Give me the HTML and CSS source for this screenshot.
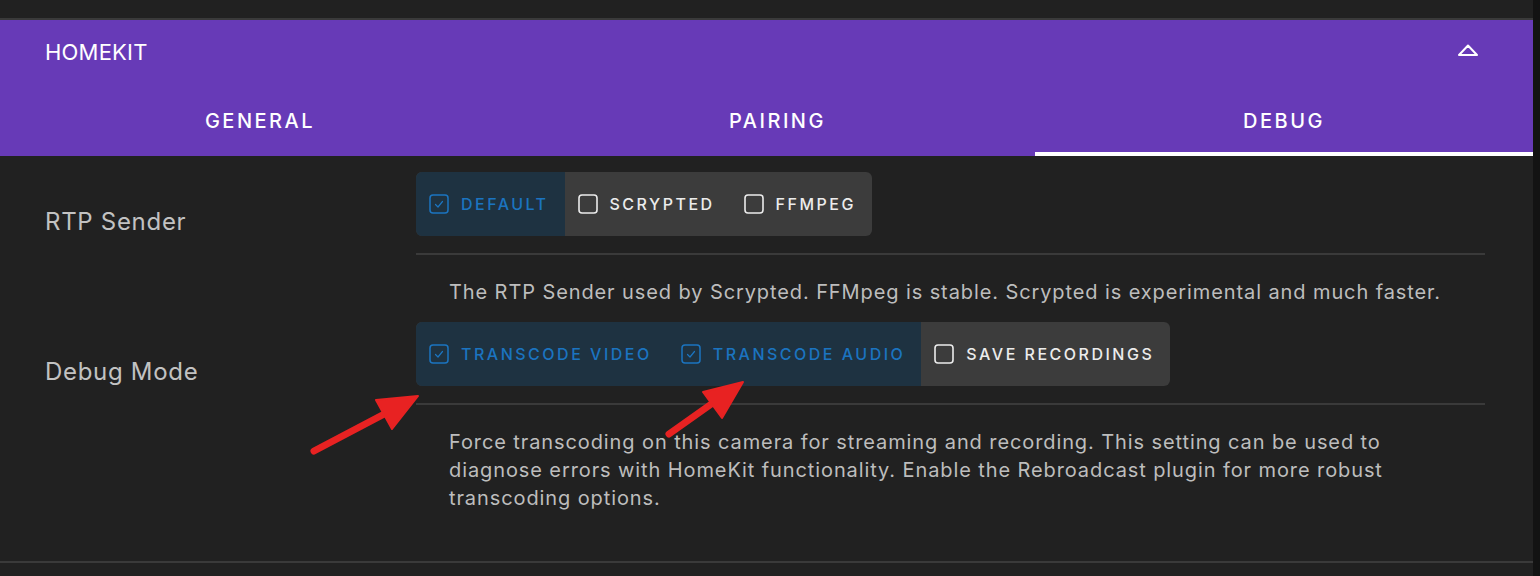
FILE: index.html
```html
<!DOCTYPE html>
<html lang="en">
<head>
<meta charset="utf-8">
<title>HomeKit</title>
<link rel="stylesheet" href="styles.css">
</head>
<body>
<div class="page">
  <div class="card">
    <header class="card-header">
      <div class="title-row">
        <span class="title">HOMEKIT</span>
        <svg class="chevron" width="22" height="14" viewBox="0 0 22 14" aria-hidden="true">
          <path d="M2 12 L11 2.5 L20 12 Z" fill="none" stroke="#fff" stroke-width="2" stroke-linejoin="round"/>
        </svg>
      </div>
      <nav class="tabs">
        <div class="tab">GENERAL</div>
        <div class="tab">PAIRING</div>
        <div class="tab active">DEBUG</div>
      </nav>
    </header>

    <section class="settings">
      <div class="setting">
        <div class="label">RTP Sender</div>
        <div class="control">
          <div class="toggle-group">
            <div class="opt on">
              <svg class="box" width="20" height="20" viewBox="0 0 20 20"><rect x="1" y="1" width="18" height="18" rx="3" fill="none" stroke="currentColor" stroke-width="1.5"/><path d="M6.5 10.5 L9 13 L13.5 7.5" fill="none" stroke="currentColor" stroke-width="1.2" stroke-linecap="round" stroke-linejoin="round"/></svg>
              <span>DEFAULT</span>
            </div>
            <div class="opt">
              <svg class="box" width="20" height="20" viewBox="0 0 20 20"><rect x="1" y="1" width="18" height="18" rx="3" fill="none" stroke="currentColor" stroke-width="1.6"/></svg>
              <span>SCRYPTED</span>
            </div>
            <div class="opt">
              <svg class="box" width="20" height="20" viewBox="0 0 20 20"><rect x="1" y="1" width="18" height="18" rx="3" fill="none" stroke="currentColor" stroke-width="1.6"/></svg>
              <span>FFMPEG</span>
            </div>
          </div>
          <div class="divider"></div>
          <p class="desc">The RTP Sender used by Scrypted. FFMpeg is stable. Scrypted is experimental and much faster.</p>
        </div>
      </div>

      <div class="setting">
        <div class="label">Debug Mode</div>
        <div class="control">
          <div class="toggle-group">
            <div class="opt on">
              <svg class="box" width="20" height="20" viewBox="0 0 20 20"><rect x="1" y="1" width="18" height="18" rx="3" fill="none" stroke="currentColor" stroke-width="1.5"/><path d="M6.5 10.5 L9 13 L13.5 7.5" fill="none" stroke="currentColor" stroke-width="1.2" stroke-linecap="round" stroke-linejoin="round"/></svg>
              <span>TRANSCODE VIDEO</span>
            </div>
            <div class="opt on">
              <svg class="box" width="20" height="20" viewBox="0 0 20 20"><rect x="1" y="1" width="18" height="18" rx="3" fill="none" stroke="currentColor" stroke-width="1.5"/><path d="M6.5 10.5 L9 13 L13.5 7.5" fill="none" stroke="currentColor" stroke-width="1.2" stroke-linecap="round" stroke-linejoin="round"/></svg>
              <span>TRANSCODE AUDIO</span>
            </div>
            <div class="opt">
              <svg class="box" width="20" height="20" viewBox="0 0 20 20"><rect x="1" y="1" width="18" height="18" rx="3" fill="none" stroke="currentColor" stroke-width="1.6"/></svg>
              <span>SAVE RECORDINGS</span>
            </div>
          </div>
          <div class="divider"></div>
          <p class="desc desc-last">Force transcoding on this camera for streaming and recording. This setting can be used to diagnose errors with HomeKit functionality. Enable the Rebroadcast plugin for more robust transcoding options.</p>
        </div>
      </div>
    </section>
  </div>
  <div class="side"></div>
</div>

<svg class="annotations" width="1540" height="576" viewBox="0 0 1540 576" aria-hidden="true">
  <g fill="#e82222" stroke="#e82222" stroke-linecap="round" stroke-linejoin="round">
    <line x1="314" y1="451" x2="390" y2="411" stroke-width="7"/>
    <polygon points="418,396 376,400 392,429" stroke-width="2"/>
    <line x1="669" y1="434" x2="717" y2="400" stroke-width="7"/>
    <polygon points="743,382 703,392 722,418" stroke-width="2"/>
  </g>
</svg>
</body>
</html>
```

FILE: styles.css
```css
* { box-sizing: border-box; }

html, body {
  margin: 0;
  padding: 0;
  background: #212121;
  height: 576px;
  overflow: hidden;
}

body {
  font-family: Inter, "Liberation Sans", sans-serif;
  position: relative;
}

.page {
  display: flex;
  height: 576px;
}

.card {
  flex: 1;
  padding-top: 18px;
}

.side {
  width: 7px;
  background: #131313;
}

.card-header {
  border-top: 2px solid #3a3a3a;
  background: #673ab7;
  color: #fff;
}

.title-row {
  height: 64px;
  display: flex;
  align-items: center;
  justify-content: space-between;
  padding: 0 54px 0 45px;
}

.title {
  font-size: 22px;
  font-weight: 400;
  letter-spacing: 0.2px;
}

.chevron {
  display: block;
  margin-top: -4px;
}

.tabs {
  display: grid;
  grid-template-columns: 520px 515px 1fr;
  height: 72px;
}

.tab {
  display: flex;
  align-items: center;
  justify-content: center;
  font-size: 20px;
  font-weight: 500;
  letter-spacing: 2.5px;
  padding-top: 6px;
  border-bottom: 4px solid transparent;
}

.tab.active {
  border-bottom-color: #fff;
}

.settings {
  padding: 16px 48px 0 45px;
  border-bottom: 2px solid #3a3a3a;
}

.setting {
  display: grid;
  grid-template-columns: 371px 1fr;
}

.label {
  padding-top: 34px;
  font-size: 24px;
  line-height: 32px;
  letter-spacing: 0.7px;
  color: #c2c2c2;
}

.toggle-group {
  display: inline-flex;
  height: 64px;
  border-radius: 6px;
  overflow: hidden;
  background: #3c3c3c;
}

.opt {
  display: flex;
  align-items: center;
  gap: 12px;
  padding: 0 16px 0 13px;
  font-size: 16px;
  font-weight: 500;
  letter-spacing: 2.5px;
  color: #ececec;
}

.opt.on {
  background: #1e3241;
  color: #1b74c0;
}

.box {
  display: block;
  flex: none;
}

.divider {
  height: 2px;
  background: #3a3a3a;
  margin-top: 17px;
}

.desc {
  margin: 23px 0 16px 33px;
  font-size: 20px;
  line-height: 28px;
  letter-spacing: 0.9px;
  color: #bdbdbd;
}

.desc-last {
  margin-bottom: 49px;
  max-width: 975px;
}

.annotations {
  position: absolute;
  left: 0;
  top: 0;
  pointer-events: none;
}
```
